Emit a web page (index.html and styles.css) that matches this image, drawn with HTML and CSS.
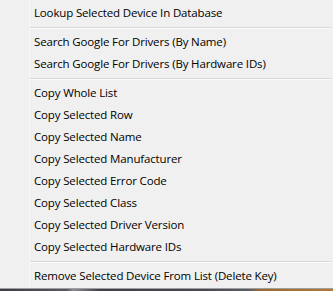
FILE: index.html
```html
<!DOCTYPE html>
<html>
<head>
<meta charset="utf-8">
<link rel="stylesheet" href="styles.css">
</head>
<body>
<div class="menu">
  <div class="item">Lookup Selected Device In Database</div>
  <div class="sep"></div>
  <div class="item">Search Google For Drivers (By Name)</div>
  <div class="item">Search Google For Drivers (By Hardware IDs)</div>
  <div class="sep"></div>
  <div class="item">Copy Whole List</div>
  <div class="item">Copy Selected Row</div>
  <div class="item">Copy Selected Name</div>
  <div class="item">Copy Selected Manufacturer</div>
  <div class="item">Copy Selected Error Code</div>
  <div class="item">Copy Selected Class</div>
  <div class="item">Copy Selected Driver Version</div>
  <div class="item">Copy Selected Hardware IDs</div>
  <div class="sep"></div>
  <div class="item">Remove Selected Device From List (Delete Key)</div>
</div>
<div class="under"></div>
</body>
</html>
```
FILE: styles.css
```css
html, body {
  margin: 0;
  padding: 0;
  background: #f0f0f0;
  overflow: hidden;
}
.menu {
  background: #f0f0f0;
  padding: 2px 0 1px 0;
  border-bottom: 1px solid #a0a0a0;
  font-family: "Open Sans", "Noto Sans", sans-serif;
  font-size: 11.5px;
  letter-spacing: -0.15px;
  color: #000;
  background-image: linear-gradient(to right, transparent 29px, #f8f8f8 29px, #f8f8f8 30px, transparent 30px);
}
.item {
  height: 22px;
  line-height: 22px;
  padding-left: 34px;
  white-space: nowrap;
}
.sep {
  height: 7px;
  display: flex;
  flex-direction: column;
  justify-content: center;
  margin: 0 2px 0 30px;
}
.sep::before {
  content: "";
  display: block;
  height: 1px;
  background: #d7d7d7;
  border-bottom: 1px solid #fbfbfb;
}
.under {
  height: 3px;
  background: linear-gradient(to right, #3a3d42 0%, #55595f 20%, #8a8e93 22%, #3d4046 30%, #45484d 60%, #5b5f64 75%, #9b6a2e 78%, #b07a35 100%);
}
```
